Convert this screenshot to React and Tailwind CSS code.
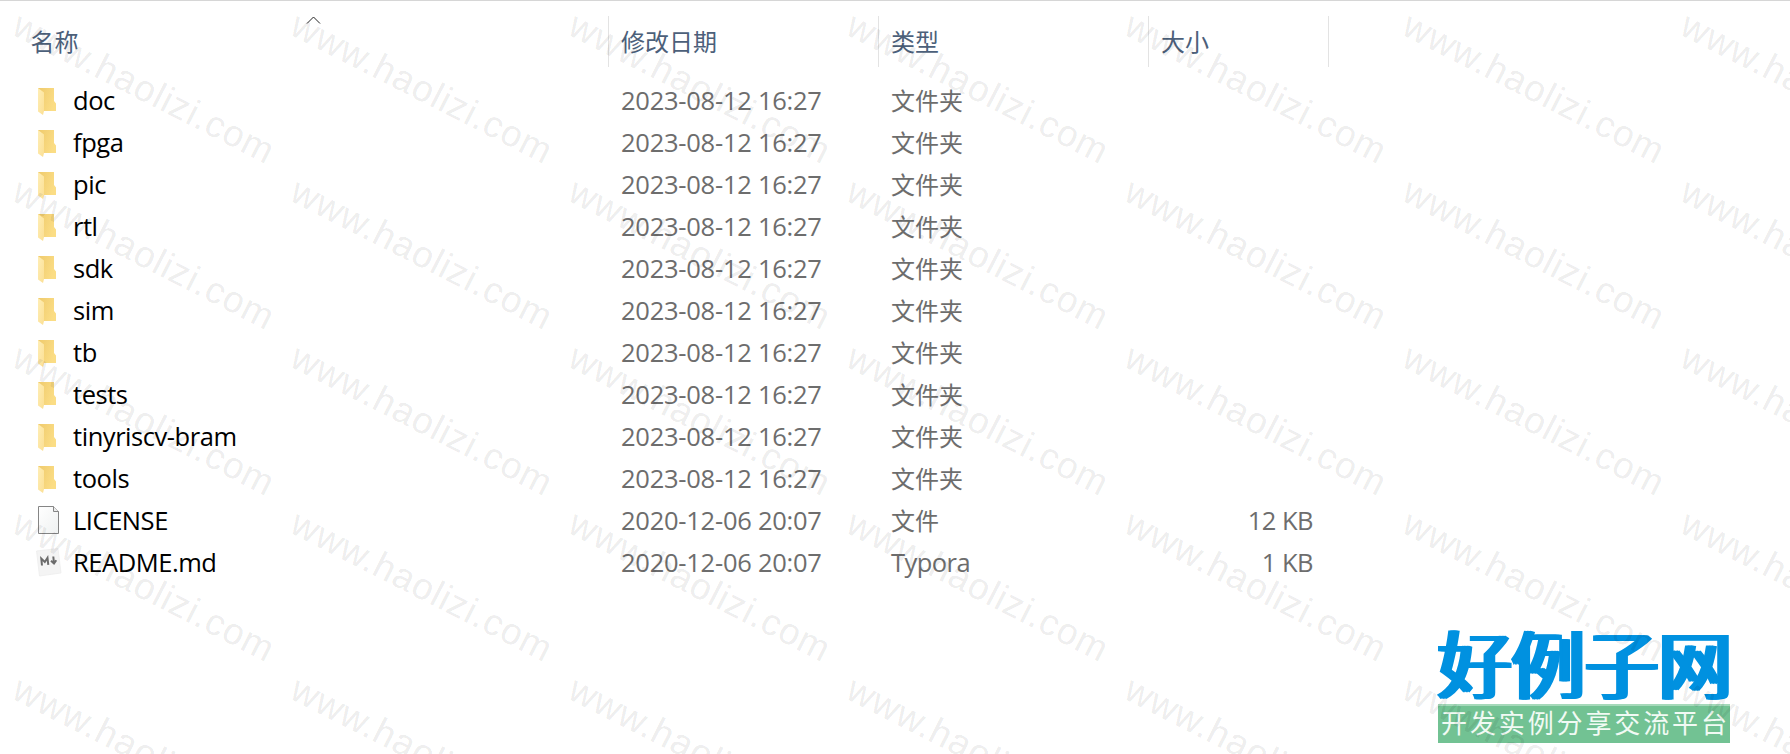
import React from "react";

const folders = [
  "doc",
  "fpga",
  "pic",
  "rtl",
  "sdk",
  "sim",
  "tb",
  "tests",
  "tinyriscv-bram",
  "tools",
];

const files = [
  ...folders.map((name) => ({
    name,
    icon: "folder",
    date: "2023-08-12 16:27",
    type: "文件夹",
    size: "",
  })),
  {
    name: "LICENSE",
    icon: "file",
    date: "2020-12-06 20:07",
    type: "文件",
    size: "12 KB",
  },
  {
    name: "README.md",
    icon: "markdown",
    date: "2020-12-06 20:07",
    type: "Typora",
    size: "1 KB",
  },
];

const FolderIcon = () => (
  <svg width="20" height="28" viewBox="0 0 20 28">
    <defs>
      <linearGradient id="back" x1="0" y1="0" x2="1" y2="0.4">
        <stop offset="0" stopColor="#efca6c" />
        <stop offset="1" stopColor="#fbdd85" />
      </linearGradient>
      <linearGradient id="flap" x1="0" y1="0" x2="1" y2="1">
        <stop offset="0" stopColor="#ffeeb6" />
        <stop offset="1" stopColor="#fbdf93" />
      </linearGradient>
    </defs>
    <path d="M0 0H16V13L18 15.500V23H0Z" fill="url(#back)" />
    <path d="M0 0L6 4.500V23L5 27L0 23.500Z" fill="url(#flap)" />
  </svg>
);

const FileIcon = () => (
  <svg width="22" height="29" viewBox="0 0 22 29">
    <defs>
      <linearGradient id="sheet" x1="0" y1="0" x2="1" y2="1">
        <stop offset="0" stopColor="#ffffff" />
        <stop offset="1" stopColor="#eff1f1" />
      </linearGradient>
    </defs>
    <path d="M0.500 0.500H15.500L20.500 5.500V27.500H0.500Z" fill="url(#sheet)" stroke="#858585" />
    <path d="M15.500 0.500V5.500H20.500" fill="#ececec" stroke="#858585" />
  </svg>
);

const MarkdownIcon = () => (
  <svg width="26" height="29" viewBox="0 0 26 29">
    <path d="M0.500 3L22 0.500L25 25L3.500 28Z" fill="#f4f4f4" stroke="#ededed" strokeWidth="0.8" />
    <g fill="none" stroke="#6b6b6b" strokeWidth="2">
      <path d="M6 17.500L5.300 10.600L8.800 14L11.500 9.900L12.300 16.800" />
      <path d="M17.300 8.500L18 15.500M15 12.800L18 15.500L20.300 12.200" />
    </g>
  </svg>
);

const icons = { folder: FolderIcon, file: FileIcon, markdown: MarkdownIcon };

const Header = () => (
  <div className="grid h-[51px] grid-cols-[609px_270px_270px_180px] text-[24px] leading-[51px] text-[#4c607a]">
    <div className="relative border-r border-[#e3e3e3] pl-[30.5px]">
      名称
      <svg className="absolute left-[306px] top-0" width="15" height="8" viewBox="0 0 15 8">
        <path d="M1 7.500L7.500 1L14 7.500" fill="none" stroke="#222" />
      </svg>
    </div>
    <div className="border-r border-[#e3e3e3] pl-[12px]">修改日期</div>
    <div className="border-r border-[#e3e3e3] pl-[12px]">类型</div>
    <div className="border-r border-[#e3e3e3] pl-[12px]">大小</div>
  </div>
);

const Row = ({ file }) => {
  const Icon = icons[file.icon];
  return (
    <div className="grid h-[42px] grid-cols-[609px_270px_270px_180px] text-[25.5px] leading-[40px] text-[#6d6d6d]">
      <div className="flex text-black">
        <span
          className={
            file.icon === "folder"
              ? "flex w-[73px] pl-[38px] pt-[8px]"
              : file.icon === "file"
              ? "flex w-[73px] pl-[38px] pt-[6px]"
              : "flex w-[73px] pl-[36px] pt-[6px]"
          }
        >
          <Icon />
        </span>
        <span className="tracking-[-0.45px]">{file.name}</span>
      </div>
      <div className="pl-[12px] tracking-[-0.25px]">{file.date}</div>
      <div
        className={
          file.type === "Typora"
            ? "pl-[12px] tracking-[-0.55px]"
            : "pl-[12px] text-[24px] leading-[42px]"
        }
      >
        {file.type}
      </div>
      <div className="pr-[16px] text-right tracking-[-0.5px]">{file.size}</div>
    </div>
  );
};

const Logo = () => (
  <div className="absolute left-[1438px] top-[618px] w-[292px] font-['Noto_Sans_CJK_SC',sans-serif]">
    <div className="h-[85px] whitespace-nowrap text-[73.5px] font-normal leading-[84px] text-[#0091e0] [text-shadow:-3px_0_#0091e0,-1.5px_0_#0091e0,1.5px_0_#0091e0,3px_0_#0091e0]">
      好例子网
    </div>
    <div className="flex h-[39px] justify-between border-t-2 border-[#a5d9ba] bg-[#72c293] px-[3px] text-[26px] leading-[32px] text-[#f1faf4]">
      {[..."开发实例分享交流平台"].map((c) => (
        <span key={c}>{c}</span>
      ))}
    </div>
  </div>
);

const Watermark = () => (
  <div className="pointer-events-none absolute left-0 top-0 grid grid-cols-[repeat(7,278px)] auto-rows-[166px] font-['Liberation_Sans',sans-serif] text-[37px] leading-none tracking-[1px] text-black/[0.085]">
    {Array.from({ length: 35 }, (_, i) => (
      <div key={i} className="pl-[24px] pt-[5px]">
        <span className="block w-max origin-top-left rotate-[27deg]">
          www.haolizi.com
        </span>
      </div>
    ))}
  </div>
);

export default function App() {
  return (
    <div className="relative h-[754px] w-[1790px] overflow-hidden border-t border-[#d6d6d6] bg-white pt-[15px] font-['Open_Sans','Noto_Sans_CJK_SC',sans-serif]">
      <Header />
      <div className="pt-[13px]">
        {files.map((file) => (
          <Row key={file.name} file={file} />
        ))}
      </div>
      <Logo />
      <Watermark />
    </div>
  );
}
